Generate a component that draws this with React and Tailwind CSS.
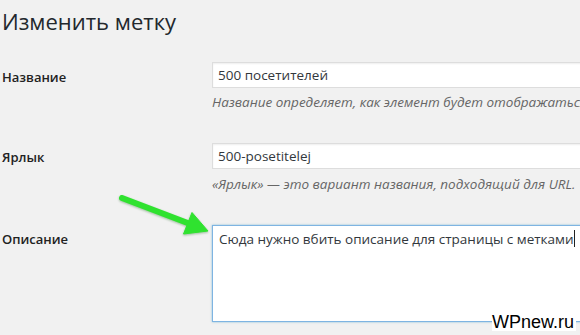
export default function App() {
  return (
    <div className="relative w-[580px] h-[335px] overflow-hidden bg-[#f1f1f1] font-['Open_Sans',sans-serif] text-[#23282d]">
      <h1 className="pl-[2px] pt-[7px] text-[22px] leading-[28px] font-normal">Изменить метку</h1>

      <div className="mt-[27px] flex">
        <div className="w-[212px] shrink-0 pl-[2px] pt-[5px] text-[13px] leading-[20px] font-semibold text-[#222]">Название</div>
        <div className="w-[420px] shrink-0">
          <div className="h-[26px] border border-[#ddd] bg-white pl-[5px] text-[13.5px] leading-[24px] text-[#32373c] shadow-[inset_0_1px_2px_rgba(0,0,0,0.07)]">
            500 посетителей
          </div>
          <p className="mt-[5px] text-[13.5px] leading-[18px] italic text-[#666] whitespace-nowrap">
            Название определяет, как элемент будет отображаться
          </p>
        </div>
      </div>

      <div className="mt-[32px] flex">
        <div className="w-[212px] shrink-0 pl-[2px] pt-[4px] text-[13px] leading-[20px] font-semibold text-[#222]">Ярлык</div>
        <div className="w-[420px] shrink-0">
          <div className="h-[26px] border border-[#ddd] bg-white pl-[5px] text-[13.5px] leading-[24px] text-[#32373c] shadow-[inset_0_1px_2px_rgba(0,0,0,0.07)]">
            500-posetitelej
          </div>
          <p className="mt-[6px] text-[13.5px] leading-[18px] italic text-[#666] whitespace-nowrap">
            «Ярлык» — это вариант названия, подходящий для URL.
          </p>
        </div>
      </div>

      <div className="mt-[32px] flex">
        <div className="w-[212px] shrink-0 pl-[2px] pt-[4px] text-[13px] leading-[20px] font-semibold text-[#222]">Описание</div>
        <div className="w-[420px] shrink-0">
          <div className="h-[97px] border border-[#7eb4e2] bg-white pl-[6px] pt-[3px] text-[13.5px] leading-[20px] text-[#32373c] whitespace-nowrap shadow-[0_0_2px_rgba(30,140,190,0.5)]">
            Сюда нужно вбить описание для страницы с метками
            <span className="inline-block w-px h-[17px] align-[-3px] bg-[#222]" />
          </div>
        </div>
      </div>

      <svg className="absolute left-0 top-0" width="580" height="335" viewBox="0 0 580 335">
        <g fill="#2fe22f" stroke="#2fe22f" style={{ filter: "drop-shadow(0 1px 1px rgba(0,90,0,0.35))" }}>
          <line x1="122" y1="198" x2="189" y2="223.5" strokeWidth="6" strokeLinecap="round" />
          <polygon points="183.5,234 192,212.5 208,231" strokeWidth="1" strokeLinejoin="round" />
        </g>
      </svg>

      <span className="absolute left-[492px] top-[313px] bg-white pr-[2px] font-['Liberation_Sans',Arial,sans-serif] text-[18px] leading-[18px] text-black">
        WPnew.ru
      </span>
    </div>
  );
}
